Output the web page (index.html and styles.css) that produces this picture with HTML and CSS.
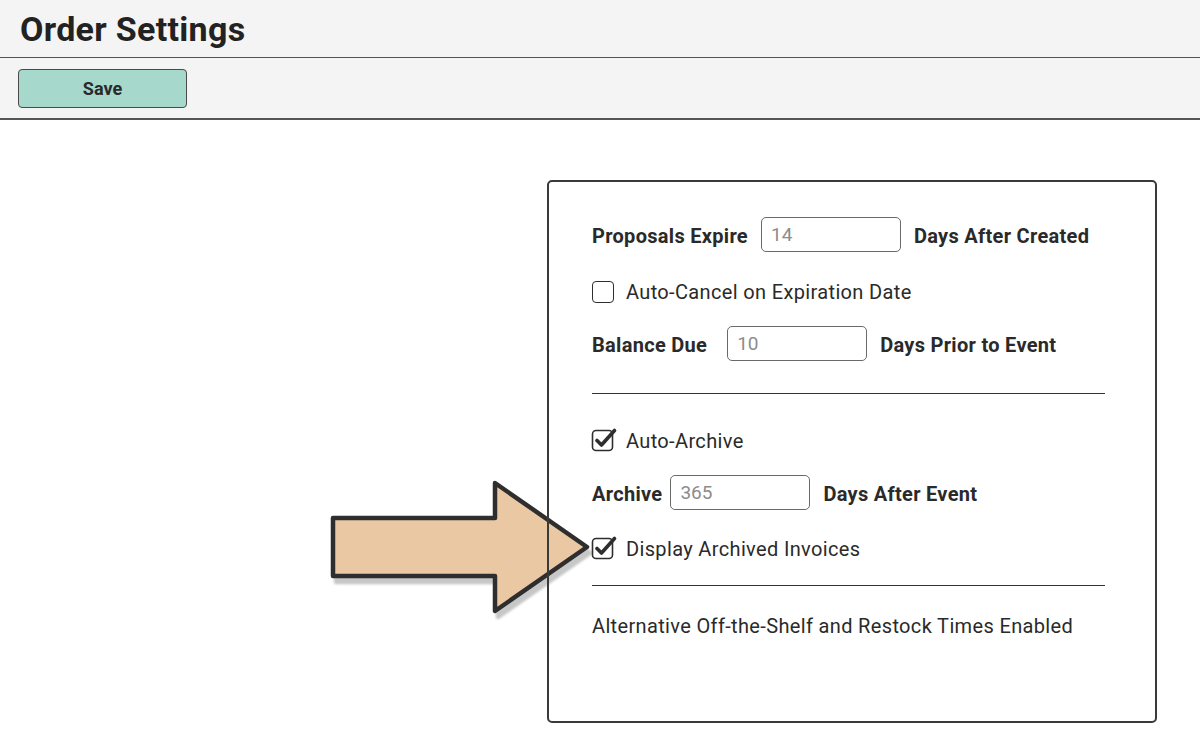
FILE: index.html
```html
<!DOCTYPE html>
<html lang="en">
<head>
    <meta charset="UTF-8">
    <title>Order Settings</title>
    <link rel="stylesheet" href="styles.css">
</head>
<body>
    <header class="page-header">
        <h1>Order Settings</h1>
    </header>
    <div class="toolbar">
        <button class="save-button">Save</button>
    </div>

    <main class="content">
        <!-- pointer arrow over the settings card -->
        <svg class="pointer-arrow" width="290" height="160" viewBox="0 0 290 160">
            <polygon points="13,49 175,49 175,14 267,78 175,142 175,107 13,107"
                     fill="#ebc8a4" stroke="#2e2e2e" stroke-width="4.5" stroke-linejoin="round"/>
        </svg>

        <div class="settings-card">
            <div class="setting-row row-proposals">
                <label class="field-label" for="proposalsExpire">Proposals Expire</label>
                <input class="days-input" type="text" id="proposalsExpire" placeholder="14">
                <span class="field-label">Days After Created</span>
            </div>

            <div class="check-row row-autocancel">
                <span class="check-box"></span>
                <span class="check-label">Auto-Cancel on Expiration Date</span>
            </div>

            <div class="setting-row row-balance">
                <label class="field-label label-balance" for="balanceDue">Balance Due</label>
                <input class="days-input" type="text" id="balanceDue" placeholder="10">
                <span class="field-label">Days Prior to Event</span>
            </div>

            <hr class="divider divider-first">

            <div class="check-row row-autoarchive">
                <svg class="check-box checked" width="26" height="26" viewBox="0 0 26 26">
                    <rect x="1.5" y="4.5" width="20" height="20" rx="3.5" fill="none" stroke="#2e2e2e" stroke-width="1.6"/>
                    <path d="M6 14.5 L10.5 19 L23.5 4.5" fill="none" stroke="#2e2e2e" stroke-width="3.6" stroke-linecap="round" stroke-linejoin="round"/>
                </svg>
                <span class="check-label">Auto-Archive</span>
            </div>

            <div class="setting-row row-archive">
                <label class="field-label label-archive" for="archiveDays">Archive</label>
                <input class="days-input" type="text" id="archiveDays" placeholder="365">
                <span class="field-label">Days After Event</span>
            </div>

            <div class="check-row row-display">
                <svg class="check-box checked" width="26" height="26" viewBox="0 0 26 26">
                    <rect x="1.5" y="4.5" width="20" height="20" rx="3.5" fill="none" stroke="#2e2e2e" stroke-width="1.6"/>
                    <path d="M6 14.5 L10.5 19 L23.5 4.5" fill="none" stroke="#2e2e2e" stroke-width="3.6" stroke-linecap="round" stroke-linejoin="round"/>
                </svg>
                <span class="check-label">Display Archived Invoices</span>
            </div>

            <hr class="divider divider-second">

            <p class="note">Alternative Off-the-Shelf and Restock Times Enabled</p>
        </div>
    </main>
</body>
</html>
```

FILE: styles.css
```css
body {
    margin: 0;
    font-family: Roboto, "Liberation Sans", Arial, sans-serif;
    color: #2a2a2a;
    background-color: #ffffff;
}

/* Header and toolbar */
.page-header {
    height: 57px;
    background-color: #f4f4f4;
    border-bottom: 1px solid #555;
    display: flex;
    align-items: center;
    padding-left: 20px;
}
.page-header h1 {
    margin: 0;
    font-size: 34px;
    font-weight: 700;
    color: #222;
    letter-spacing: 0.3px;
}
.toolbar {
    height: 60px;
    background-color: #f4f4f4;
    border-bottom: 2px solid #555;
    display: flex;
    align-items: center;
    padding-left: 18px;
}
.save-button {
    width: 169px;
    height: 39px;
    background-color: #a6d8cc;
    border: 1.5px solid #4a4a4a;
    border-radius: 4px;
    font-family: Roboto, "Liberation Sans", Arial, sans-serif;
    font-size: 18px;
    font-weight: 700;
    color: #2a2a2a;
    cursor: pointer;
}

/* Content area */
.content {
    position: relative;
    display: flex;
    justify-content: flex-end;
    padding: 60px 43px 0 0;
}
.pointer-arrow {
    position: absolute;
    left: 320px;
    top: 349px;
    z-index: 0;
    filter: drop-shadow(3px 6px 1px rgba(0, 0, 0, 0.22));
}
.settings-card {
    position: relative;
    z-index: 1;
    box-sizing: border-box;
    width: 610px;
    height: 543px;
    border: 2px solid #3a3a3a;
    border-radius: 5px;
    padding: 0 50px 0 43px;
}

.setting-row {
    display: flex;
    align-items: center;
    height: 36px;
    gap: 13px;
}
.field-label {
    font-size: 20px;
    font-weight: 700;
    letter-spacing: 0.3px;
    color: #2a2a2a;
    padding-top: 3px;
}
.days-input {
    width: 140px;
    height: 35px;
    box-sizing: border-box;
    border: 1.5px solid #6a6a6a;
    border-radius: 5px;
    padding: 0 9px;
    font-family: Roboto, "Liberation Sans", Arial, sans-serif;
    font-size: 19px;
    color: #555;
    background: #fff;
}
.days-input::placeholder {
    color: #8c8c8c;
}
.label-balance {
    margin-right: 7px;
}
.label-archive {
    margin-right: -5px;
}

.check-row {
    display: flex;
    align-items: center;
    height: 22px;
    gap: 12px;
}
.check-box {
    width: 22px;
    height: 22px;
    box-sizing: border-box;
    border: 1.6px solid #2e2e2e;
    border-radius: 4px;
    flex-shrink: 0;
}
.check-box.checked {
    border: none;
    width: 26px;
    height: 26px;
    margin: -4px -3px 0 -1px;
}
.check-label {
    font-size: 20px;
    letter-spacing: 0.35px;
    color: #2a2a2a;
}

.divider {
    border: none;
    border-top: 1.5px solid #333;
    margin: 0;
}

.note {
    margin: 0;
    font-size: 20px;
    letter-spacing: 0.35px;
    line-height: 22px;
    color: #2a2a2a;
}

/* vertical spacing of the rows */
.row-proposals { margin-top: 34px; }
.row-autocancel { margin-top: 29px; }
.row-balance { margin-top: 22px; }
.divider-first { margin-top: 32px; }
.row-autoarchive { margin-top: 36px; }
.row-archive { margin-top: 22px; }
.row-display { margin-top: 28px; }
.divider-second { margin-top: 25px; }
.note { margin-top: 29px; }
```
